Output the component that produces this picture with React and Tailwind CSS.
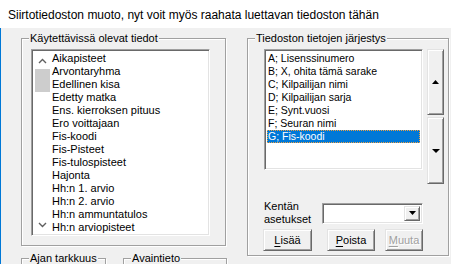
import React from "react";

const leftItems = [
  "Aikapisteet",
  "Arvontaryhma",
  "Edellinen kisa",
  "Edetty matka",
  "Ens. kierroksen pituus",
  "Ero voittajaan",
  "Fis-koodi",
  "Fis-Pisteet",
  "Fis-tulospisteet",
  "Hajonta",
  "Hh:n 1. arvio",
  "Hh:n 2. arvio",
  "Hh:n ammuntatulos",
  "Hh:n arviopisteet",
];

const rightItems = [
  "A; Lisenssinumero",
  "B; X, ohita tämä sarake",
  "C; Kilpailijan nimi",
  "D; Kilpailijan sarja",
  "E; Synt.vuosi",
  "F; Seuran nimi",
  "G; Fis-koodi",
];

function Chevron({ up }) {
  return (
    <svg width="9" height="6" viewBox="0 0 9 6">
      <polyline
        points={up ? "1,5 4.5,1.5 8,5" : "1,1 4.5,4.5 8,1"}
        fill="none"
        stroke="#606060"
        strokeWidth="1.4"
      />
    </svg>
  );
}

function Tri({ up, w = 7 }) {
  return (
    <svg width={w} height="4" viewBox={`0 0 ${w} 4`}>
      <polygon
        points={up ? `0,4 ${w},4 ${w / 2},0` : `0,0 ${w},0 ${w / 2},4`}
        fill="#000"
      />
    </svg>
  );
}

function Group({ label, className, children }) {
  return (
    <div
      className={`relative border border-[#a0a0a0] shadow-[inset_1px_1px_0_#fff,1px_1px_0_#fff] ${className}`}
    >
      <span className="absolute left-[7px] -top-[8px] bg-[#f0f0f0] px-px text-[11px] leading-[14px] text-black whitespace-nowrap">
        {label}
      </span>
      {children}
    </div>
  );
}

const raised =
  "border border-t-[#e3e3e3] border-l-[#e3e3e3] border-r-[#696969] border-b-[#696969] shadow-[inset_1px_1px_0_#fff,inset_-1px_-1px_0_#a0a0a0] bg-[#f0f0f0]";
const sunken =
  "border border-t-[#a0a0a0] border-l-[#a0a0a0] border-r-white border-b-white shadow-[inset_1px_1px_0_#696969,inset_-1px_-1px_0_#e3e3e3] bg-white";

function Btn({ children, className, disabled }) {
  return (
    <div
      className={`${raised} h-[22px] flex items-center justify-center text-[11px] leading-[13px] ${
        disabled ? "text-[#a0a0a0] [text-shadow:1px_1px_0_#fff]" : "text-black"
      } ${className}`}
    >
      {children}
    </div>
  );
}

export default function App() {
  return (
    <div className="w-[451px] h-[264px] overflow-hidden flex flex-col font-['Liberation_Sans',Arial,sans-serif] text-black">
      <div className="h-[28px] shrink-0 bg-white pl-[8px] pt-[8px] text-[12px] leading-[15px] whitespace-nowrap">
        Siirtotiedoston muoto, nyt voit myös raahata luettavan tiedoston tähän
      </div>
      <div className="flex-1 bg-[#f0f0f0] border-l border-[#0078d7] flex pl-[20px] pt-[10px] gap-[21px]">
        {/* left column */}
        <div className="w-[205px] shrink-0 flex flex-col gap-[12px]">
          <Group label="Käytettävissä olevat tiedot" className="h-[208px] pt-[10px] pl-[9px]">
            <div className={`${sunken} w-[179px] h-[187px] p-[2px] flex`}>
              <div className="w-[17px] h-full flex flex-col bg-white">
                <div className="h-[17px] flex items-center justify-center">
                  <Chevron up />
                </div>
                <div className="h-[23px] ml-px w-[15px] bg-[#cdcdcd]" />
                <div className="flex-1" />
                <div className="h-[17px] flex items-center justify-center">
                  <Chevron />
                </div>
              </div>
              <div className="flex-1 pl-px flex flex-col">
                {leftItems.map((t) => (
                  <div key={t} className="h-[13px] text-[11px] leading-[13px] whitespace-nowrap">
                    {t}
                  </div>
                ))}
              </div>
            </div>
          </Group>
          <div className="flex gap-[17px]">
            <Group label="Ajan tarkkuus" className="w-[85px] h-[30px] shrink-0" />
            <Group label="Avaintieto" className="w-[104px] h-[30px] shrink-0" />
          </div>
        </div>

        {/* right column */}
        <Group
          label="Tiedoston tietojen järjestys"
          className="w-[202px] h-[218px] shrink-0 pt-[10px] pl-[16px] flex flex-col"
        >
          <div className="flex items-start">
            <div className={`${sunken} w-[159px] h-[121px] p-[2px] flex flex-col`}>
              {rightItems.map((t, i) => {
                const sel = i === rightItems.length - 1;
                return (
                  <div
                    key={t}
                    className={`h-[13px] border text-[10.5px] leading-[11px] whitespace-nowrap ${
                      sel
                        ? "bg-[#0078d7] text-white border-dotted border-[#f0a040]"
                        : "border-transparent"
                    }`}
                  >
                    {t}
                  </div>
                );
              })}
            </div>
            <div className="ml-[4px] w-[17px] flex flex-col gap-[2px]">
              <div className={`${raised} h-[66px] flex items-center justify-center`}>
                <Tri up />
              </div>
              <div className={`${raised} h-[67px] flex items-center justify-center`}>
                <Tri w={8} />
              </div>
            </div>
          </div>
          <div className="mt-[16px] h-[26px] flex items-center">
            <div className="w-[58px] text-[11px] leading-[13px]">
              Kentän
              <br />
              asetukset
            </div>
            <div className={`${sunken} w-[101px] h-[21px] p-[2px] flex justify-end`}>
              <div className={`${raised} w-[16px] h-full flex items-center justify-center`}>
                <Tri w={7} />
              </div>
            </div>
          </div>
          <div className="mt-[3px] flex -ml-px">
            <Btn className="w-[49px]">
              <span className="underline underline-offset-[2px]">L</span>isää
            </Btn>
            <Btn className="w-[48px] ml-[15px]">
              <span className="underline underline-offset-[2px]">P</span>oista
            </Btn>
            <Btn className="w-[38px] ml-[10px]" disabled>
              <span className="underline underline-offset-[2px]">M</span>uuta
            </Btn>
          </div>
        </Group>
      </div>
    </div>
  );
}
